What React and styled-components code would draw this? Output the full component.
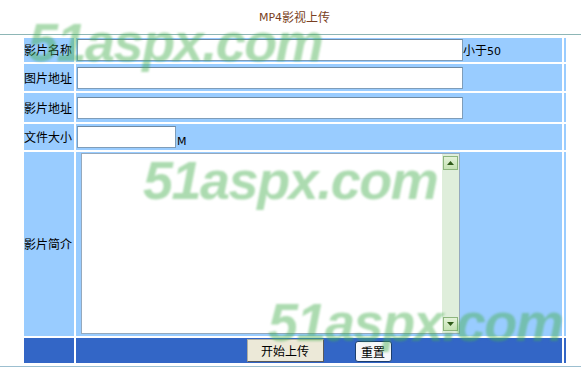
import styled, {createGlobalStyle} from 'styled-components';

const GlobalStyle = createGlobalStyle`
  html, body {
    margin: 0;
    padding: 0;
    background: #fff;
  }
  body {
    font-family: "Noto Sans CJK SC", "DejaVu Sans", sans-serif;
    font-size: 12px;
    color: #000;
  }
`;

const Page = styled.div`
  position: relative;
  width: 581px;
  height: 370px;
  overflow: hidden;
`;

const Title = styled.div`
  height: 34px;
  display: flex;
  align-items: center;
  justify-content: center;
  padding-left: 8px;
  box-sizing: border-box;
  color: #7a3f22;
  font-size: 12px;
  line-height: 1;
`;

const Latin = styled.span`
  font-family: "DejaVu Sans", sans-serif;
  font-size: 11px;
`;

const Rule = styled.div`
  height: 1px;
  background: #8db6b6;
`;

const BottomRule = styled(Rule)`
  margin-top: 1px;
  background: #9cbfd0;
`;

const Form = styled.div`
  display: grid;
  grid-template-columns: 50px 486px 2px;
  grid-template-rows: 24px 27px 29px 26px 184px 25px;
  gap: 2px;
  padding: 2px;
  margin: 1px 0 0 22px;
  width: max-content;
`;

const Cell = styled.div`
  background: ${p => (p.$dark ? '#3366c6' : '#99ccff')};
  display: flex;
  align-items: ${p => p.$align || 'center'};
  justify-content: ${p => p.$justify || 'flex-start'};
  gap: ${p => p.$gap || 0}px;
  line-height: 1;
  white-space: nowrap;
`;

const Label = styled(Cell)`
  font-size: 12px;
`;

const TextInput = styled.input`
  box-sizing: border-box;
  width: ${p => p.$w}px;
  height: 22px;
  margin: 0 0 0 1px;
  padding: 0 2px;
  border: 1px solid #7f9db9;
  border-top-color: #6f8aa3;
  background: #fff;
  outline: none;
`;

const Suffix = styled(Latin)`
  margin-top: ${p => p.$down || 0}px;
  margin-left: 1px;
  font-weight: normal;
`;

const AreaBox = styled.div`
  box-sizing: border-box;
  width: 379px;
  height: 181px;
  margin: 1px 0 0 5px;
  border: 1px solid #95a9bd;
  background: #fff;
  display: flex;
`;

const Area = styled.textarea`
  flex: 1;
  border: none;
  resize: none;
  outline: none;
  padding: 2px;
  overflow: hidden;
  background: transparent;
`;

const ScrollTrack = styled.div`
  width: 17px;
  background: #dfeedb;
  display: flex;
  flex-direction: column;
  justify-content: space-between;
  align-items: center;
  padding: 2px 0;
  box-sizing: border-box;
`;

const ScrollBtn = styled.div`
  width: 15px;
  height: 14px;
  box-sizing: border-box;
  border: 1px solid #8db57d;
  background: linear-gradient(#e3f2d8, #c5e2b3);
  display: flex;
  align-items: center;
  justify-content: center;
`;

const Button = styled.button`
  box-sizing: border-box;
  height: ${p => p.$h}px;
  width: ${p => p.$w}px;
  padding: 0;
  font-family: "Noto Sans CJK SC", sans-serif;
  font-size: 12px;
  line-height: 1;
  color: #000;
  background: ${p => (p.$plain ? '#f6f7fa' : '#ece9d8')};
  border: 1px solid ${p => (p.$plain ? '#1c3e6e' : '#5a5a5a')};
  border-top-color: ${p => (p.$plain ? '#1c3e6e' : '#b0aea0')};
  border-left-color: ${p => (p.$plain ? '#1c3e6e' : '#b0aea0')};
  border-radius: ${p => (p.$plain ? 3 : 0)}px;
  margin-top: ${p => p.$top || 0}px;
`;

const Watermark = styled.div`
  position: absolute;
  left: ${p => p.$x}px;
  top: ${p => p.$y}px;
  font-family: "Liberation Sans", Arial, sans-serif;
  font-weight: bold;
  font-style: italic;
  font-size: 54px;
  letter-spacing: -1.5px;
  line-height: 1;
  color: rgba(70, 175, 80, 0.45);
  filter: blur(0.8px);
  pointer-events: none;
  white-space: nowrap;
`;

const Arrow = ({up}) => (
  <svg width="7" height="4" viewBox="0 0 7 4">
    <polygon points={up ? '3.5,0 7,4 0,4' : '0,0 7,0 3.5,4'} fill="#2f5a18" />
  </svg>
);

export default function App() {
  return (
    <Page>
      <GlobalStyle />
      <Title><Latin>MP4</Latin>影视上传</Title>
      <Rule />
      <Form>
        <Label>影片名称</Label>
        <Cell>
          <TextInput $w={386} />
          <span>小于<Latin>50</Latin></span>
        </Cell>
        <Cell />

        <Label>图片地址</Label>
        <Cell><TextInput $w={386} /></Cell>
        <Cell />

        <Label>影片地址</Label>
        <Cell><TextInput $w={386} /></Cell>
        <Cell />

        <Label>文件大小</Label>
        <Cell>
          <TextInput $w={99} />
          <Suffix $down={9}>M</Suffix>
        </Cell>
        <Cell />

        <Label>影片简介</Label>
        <Cell $align="flex-start">
          <AreaBox>
            <Area />
            <ScrollTrack>
              <ScrollBtn><Arrow up /></ScrollBtn>
              <ScrollBtn><Arrow /></ScrollBtn>
            </ScrollTrack>
          </AreaBox>
        </Cell>
        <Cell />

        <Cell $dark />
        <Cell $dark $justify="center" $gap={31}>
          <Button $w={77} $h={23}>开始上传</Button>
          <Button $plain $w={37} $h={21} $top={2}>重置</Button>
        </Cell>
        <Cell $dark />
      </Form>
      <BottomRule />

      <Watermark $x={28} $y={15}>51aspx.com</Watermark>
      <Watermark $x={143} $y={153}>51aspx.com</Watermark>
      <Watermark $x={268} $y={295}>51aspx.com</Watermark>
    </Page>
  );
}
